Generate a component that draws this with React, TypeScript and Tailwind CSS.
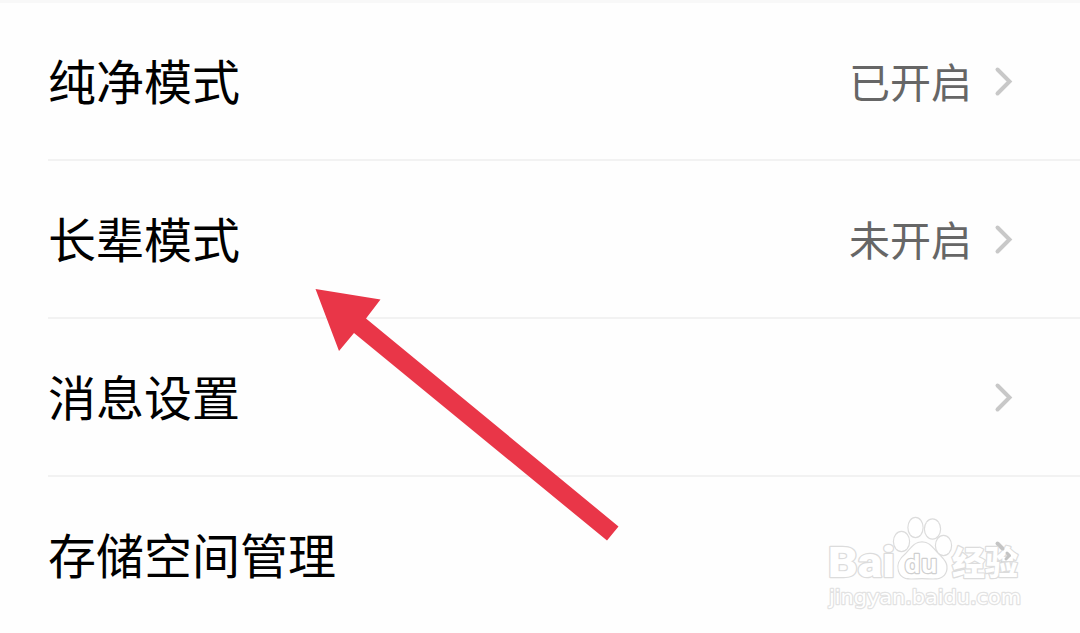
interface SettingItem {
  label: string;
  value?: string;
}

const items: SettingItem[] = [
  { label: '纯净模式', value: '已开启' },
  { label: '长辈模式', value: '未开启' },
  { label: '消息设置' },
  { label: '存储空间管理' },
];

function Chevron() {
  return (
    <svg className="h-8 w-5" viewBox="0 0 20 32" fill="none" aria-hidden>
      <path d="M3.5 4.5 L15.5 16.5 L3.5 28.5" stroke="#c8c8c8" strokeWidth="4" strokeLinecap="round" />
    </svg>
  );
}

function SettingRow({ label, value }: SettingItem) {
  return (
    <li className="ml-12 flex h-[158px] shrink-0 items-center justify-between border-b-2 border-[#f2f2f2] pr-[66px]">
      <span className="pb-1 text-[48px] leading-none text-black">{label}</span>
      <span className="flex items-center gap-[22px]">
        {value ? <span className="pb-[2px] text-[41px] leading-none text-[#666]">{value}</span> : null}
        <Chevron />
      </span>
    </li>
  );
}

function PointerArrow() {
  return (
    <svg className="absolute top-[280px] left-[305px]" width="325" height="270" viewBox="305 280 325 270" aria-hidden>
      <path d="M315.5 289 L380.5 299.5 L366 318.5 L618.5 526.5 L607 540.5 L354 333 L339 351 Z" fill="#e93648" />
    </svg>
  );
}

function Watermark() {
  return (
    <svg
      className="absolute top-[510px] left-[820px]"
      width="210"
      height="105"
      viewBox="820 510 210 105"
      fill="#fff"
      stroke="#dcdcdc"
      strokeWidth="2.4"
      strokeLinejoin="round"
      paintOrder="stroke"
    >
      <ellipse cx="901.5" cy="541.5" rx="7.5" ry="9.5" />
      <ellipse cx="915.5" cy="527.5" rx="7" ry="9.5" />
      <ellipse cx="932.5" cy="529" rx="7.5" ry="9.5" />
      <ellipse cx="943.5" cy="545.5" rx="7.5" ry="9.5" />
      <path d="M922 542.5 C914 542.5 911 549 906 554 C900 559 897 564 899 571 C902 581 912 578 922 578 C932 578 943 581 946 571 C948 563 943 559 938 554 C933 549 930 542.5 922 542.5 Z" />
      <text
        x="828"
        y="577"
        fontSize="42"
        fontWeight="900"
        fontFamily="Roboto, sans-serif"
        textLength="67"
        lengthAdjust="spacingAndGlyphs"
      >
        Bai
      </text>
      <text
        x="904.5"
        y="573"
        fontSize="25"
        fontWeight="700"
        fontFamily="'Open Sans', sans-serif"
        stroke="#cfcfcf"
        textLength="33"
        lengthAdjust="spacingAndGlyphs"
      >
        du
      </text>
      <text x="952" y="574.5" fontSize="33" fontWeight="900" fontFamily="'Noto Sans CJK SC', sans-serif">
        经验
      </text>
      <text
        x="829"
        y="603.5"
        fontSize="20"
        fontFamily="'DejaVu Sans', sans-serif"
        stroke="#e2e2e2"
        textLength="192"
        lengthAdjust="spacingAndGlyphs"
      >
        jingyan.baidu.com
      </text>
      {/* the row chevron shows faintly through the last glyph */}
      <path d="M997.5 543.5 L1003 549 M1007 553 L1009.5 555.5 L1006 559" fill="none" stroke="#c4c4c4" strokeWidth="3" strokeLinecap="round" />
    </svg>
  );
}

export default function App() {
  return (
    <div className="relative h-[633px] w-full overflow-hidden border-t-[3px] border-[#f8f8f8] bg-[#fefefe] font-['Noto_Sans_CJK_SC',sans-serif]">
      <ul className="flex flex-col">
        {items.map((item) => (
          <SettingRow key={item.label} {...item} />
        ))}
      </ul>
      <div className="absolute -top-[3px] left-0">
        <PointerArrow />
        <Watermark />
      </div>
    </div>
  );
}
